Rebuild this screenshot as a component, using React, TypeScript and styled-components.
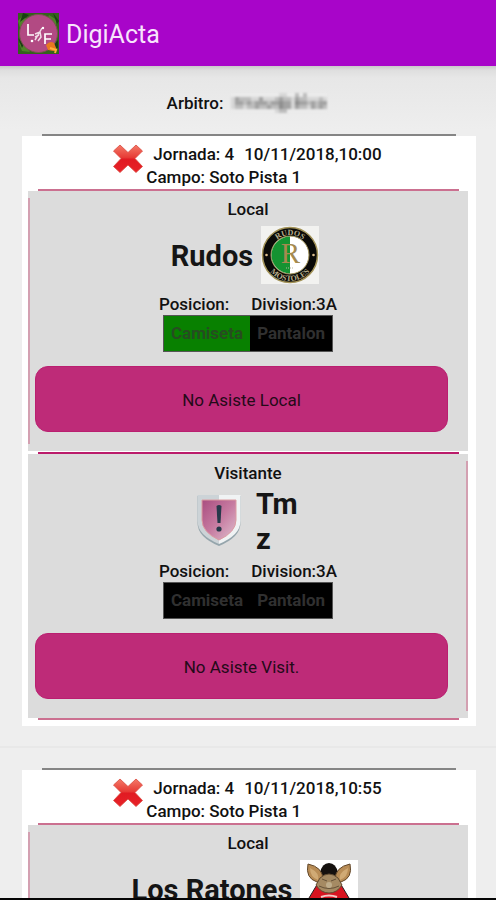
import React from "react";
import styled, { createGlobalStyle } from "styled-components";

const GlobalStyle = createGlobalStyle`
  * { box-sizing: border-box; }
  body { margin: 0; background: #eee; font-family: Roboto, "Liberation Sans", sans-serif; color: #111; }
`;

const Screen = styled.div`
  display: flex;
  flex-direction: column;
  height: 100vh;
  background: #eee;
  border-bottom: 2px solid #050505;
`;

const AppBar = styled.header`
  display: flex;
  align-items: center;
  gap: 7px;
  flex: none;
  height: 66px;
  padding: 0 18px;
  background: #a805c9;
`;

const AppTitle = styled.h1`
  margin: 0;
  padding-top: 3px;
  font-size: 25px;
  line-height: 32px;
  font-weight: 400;
  color: #f8e4fc;
`;

const Content = styled.main`
  flex: 1;
  min-height: 0;
  overflow-y: auto;
  scrollbar-width: none;
  background: linear-gradient(#c9c9c9, #dedede 4px, #e7e7e7 12px, #eee 64px);
`;

const Referee = styled.div`
  display: flex;
  justify-content: center;
  align-items: center;
  gap: 6px;
  padding: 26px 0 20px;
  font-size: 17px;
  line-height: 22px;
  font-weight: 500;
`;

const MatchItem = styled.article`
  padding: 0 20px 20px 22px;
  & + & {
    border-top: 2px solid #e8e8e8;
    padding-top: 20px;
  }
`;

const CardRule = styled.div`
  height: 2px;
  margin: 0 20px;
  background: #858585;
`;

const Card = styled.div`
  padding: 7px 8px 6px 6px;
  background: #fff;
`;

const CardHeader = styled.div`
  display: flex;
  justify-content: center;
  gap: 2px;
  padding-right: 2px;
  font-size: 17px;
  line-height: 23px;
  font-weight: 500;
`;

const MatchTime = styled.div`
  display: flex;
  gap: 10px;
  padding-left: 7px;
`;

const PinkRule = styled.div<{ $strong?: boolean }>`
  height: 2px;
  margin: ${(p) => (p.$strong ? 1 : 0)}px 9px 0 10px;
  background: ${(p) => (p.$strong ? "#bb1c6b" : "#cb7090")};
`;

const Panel = styled.section<{ $side: "left" | "right" }>`
  position: relative;
  padding: ${(p) => (p.$side === "right" ? 8 : 7)}px 20px 19px 7px;
  background: #dcdcdc;
  &::before {
    content: "";
    position: absolute;
    top: 7px;
    bottom: 7px;
    ${(p) => p.$side}: 0;
    width: 2px;
    background: #d3a0b1;
  }
`;

const Info = styled.div`
  display: flex;
  flex-direction: column;
  align-items: center;
  margin: 0 -13px 14px 0;
  font-size: 17px;
  line-height: 22px;
  font-weight: 500;
`;

const Role = styled.h2`
  margin: 0;
  font-size: 17px;
  line-height: 22px;
  font-weight: 500;
`;

const TeamRow = styled.div<{ $reverse?: boolean }>`
  display: flex;
  flex-direction: ${(p) => (p.$reverse ? "row-reverse" : "row")};
  align-items: center;
  gap: 8px;
  min-height: 73px;
  padding: 3px 6px 3px 0;
  svg { margin-bottom: 4px; }
`;

const TeamName = styled.div<{ $narrow?: boolean }>`
  width: ${(p) => (p.$narrow ? "44px" : "auto")};
  font-size: 29px;
  line-height: 35px;
  font-weight: 700;
  color: #151515;
`;

const Details = styled.div`
  display: flex;
  gap: 22px;
`;

const Kit = styled.div`
  display: flex;
  border: 1px solid #555;
`;

const KitPart = styled.span<{ $fill: string; $ink: string }>`
  padding: 0 7px;
  font-weight: 700;
  line-height: 35px;
  background: ${(p) => p.$fill};
  color: ${(p) => p.$ink};
`;

const AbsentButton = styled.button`
  display: block;
  width: 100%;
  height: 66px;
  padding: 2px 0 0;
  border: 1px solid #ba1f70;
  border-radius: 13px;
  background: #be2b78;
  font: 400 17px/22px Roboto, "Liberation Sans", sans-serif;
  color: #240a18;
`;

const AppLogo = () => (
  <svg width="41" height="41" viewBox="0 0 41 41" aria-hidden="true">
    <rect width="41" height="41" fill="#34621c" />
    <path d="M0 8l5-6 4 5-7 8zM31 2l8 5-2 8-8-8zM1 30l6 2 5 7-8-1z" fill="#4f8428" />
    <path d="M5 0l6 2-9 7zM35 0l6 8-2 3zM0 25l6 6-2 4zM33 35l7-8v8z" fill="#193f12" />
    <circle cx="20.5" cy="20.5" r="19" fill="#b24a83" stroke="#7b5250" />
    <path d="M10 11v11h6M27 31V21h7M27 26h6" fill="none" stroke="#fff" strokeWidth="1.7" />
    <path d="M24 15l-4 7-3 5M17 21l5-2 1 5-3 4M17 24l4-2" fill="none" stroke="#f1dce7" strokeWidth="1.5" />
    <circle cx="25" cy="15" r="1.2" fill="#fff" />
    <circle cx="14" cy="28" r="1.3" fill="#fff" />
    <path d="M28 32q4-5 8-2l3 7-4 1-5-1z" fill="#e87920" />
    <path d="M32 35l6 2-1 3" fill="none" stroke="#ffb03a" strokeWidth="2" />
  </svg>
);

const mosaic = [
  "000000000000110020200000",
  "132221131112322132211121",
  "133232333233433143323233",
  "122122322322433132213232",
  "000000000001220000000000",
];
const greys = ["#ebebeb", "#d6d6d6", "#bdbdbd", "#a3a3a3", "#8f8f8f"];

const HiddenAddress = styled.svg`
  filter: blur(1px);
`;

const MaskedAddress = () => (
  <HiddenAddress width="100" height="20" viewBox="0 0 96 20" role="img" aria-label="Oculto">
    {mosaic.map((line, y) =>
      [...line].map((level, x) => (
        <rect key={`${y}-${x}`} x={x * 4} y={y * 4} width="4" height="4" fill={greys[Number(level)]} />
      )),
    )}
  </HiddenAddress>
);

const CrossIcon = () => (
  <svg width="32" height="32" viewBox="0 0 32 32" aria-hidden="true">
    <defs>
      <linearGradient id="cross" x1="0" y1="0" x2="0" y2="1">
        <stop offset="0" stopColor="#f47a68" />
        <stop offset=".45" stopColor="#e73c36" />
        <stop offset=".52" stopColor="#e11b22" />
        <stop offset="1" stopColor="#e82128" />
      </linearGradient>
    </defs>
    <path
      d="M8 2l8 7.500L24 2l6.500 6-7.500 7.500 7.500 8L24 29.500l-8-7.500-8 7.500L1.500 23.500l7.500-8L1.500 8z"
      fill="url(#cross)"
      stroke="#d9493f"
      strokeWidth=".8"
      strokeLinejoin="round"
    />
  </svg>
);

const RudosCrest = () => (
  <svg width="58" height="58" viewBox="0 0 58 58" aria-label="Rudos">
    <defs>
      <path id="crestTop" d="M9 29a20 20 0 0 1 40 0" />
      <path id="crestBottom" d="M3 29a26 26 0 0 0 52 0" />
    </defs>
    <rect width="58" height="58" fill="#f2f2f0" />
    <circle cx="29" cy="29" r="27.500" fill="#0a0a08" stroke="#a39358" strokeWidth="1.500" />
    <circle cx="29" cy="29" r="19" fill="#fff" stroke="#a39358" />
    <path d="M29 10.500a18.500 18.500 0 0 0 0 37z" fill="#159331" />
    <text x="29.500" y="37" textAnchor="middle" fontFamily="Liberation Serif, serif" fontSize="29" fill="#a58a50">R</text>
    <text fontFamily="Liberation Serif, serif" fontWeight="700" fontSize="8" fill="#b9ae8c" textAnchor="middle">
      <textPath href="#crestTop" startOffset="50%">RUDOS</textPath>
    </text>
    <text fontFamily="Liberation Serif, serif" fontWeight="700" fontSize="8" fill="#b9ae8c" textAnchor="middle">
      <textPath href="#crestBottom" startOffset="50%">MOSTOLES</textPath>
    </text>
    <circle cx="5.500" cy="29" r="1.300" fill="#e0bf8e" />
    <circle cx="52.500" cy="29" r="1.300" fill="#e0bf8e" />
    <path d="M25 42h8" stroke="#b3b5a0" strokeDasharray="1 1" />
  </svg>
);

const ShieldCrest = () => (
  <svg width="58" height="58" viewBox="0 0 58 58" aria-label="Tmz">
    <defs>
      <linearGradient id="shield" x1="0" y1="0" x2="1" y2="1">
        <stop offset="0" stopColor="#a94d80" />
        <stop offset=".5" stopColor="#c67aa0" />
        <stop offset="1" stopColor="#dfc0cf" />
      </linearGradient>
    </defs>
    <path d="M7.500 5h43v27q0 14-21.500 23Q7.500 46 7.500 32z" fill="#95a5ac" />
    <path d="M7.500 4H29v49Q7.500 44 7.500 30z" fill="#ccd3d7" />
    <path d="M29 4h21.500v26q0 14-21.500 23z" fill="#f0f3f4" />
    <path d="M12 9h34v20q0 12-17 20Q12 41 12 29z" fill="url(#shield)" stroke="#dc9ba1" />
    <path d="M26.500 15q2.500-2 5 0l-1 17h-3z" fill="#27394a" />
    <circle cx="29" cy="38" r="2.600" fill="#27394a" />
  </svg>
);

const MouseCrest = () => (
  <svg width="58" height="58" viewBox="0 0 58 58" aria-label="Los Ratones">
    <rect width="58" height="58" fill="#fff" />
    <path d="M20 13Q22 3 29 3t9 10l-2 7H22z" fill="#15110f" />
    <path d="M18 23L6 43v15h46V43L40 23z" fill="#d81420" stroke="#222" />
    <path d="M8 4q-3 14 9 18l6-2Q23 7 8 4zM50 4q3 14-9 18l-6-2Q35 7 50 4z" fill="#b88c55" stroke="#62482b" />
    <path d="M10 8q0 9 8 12 2-7-8-12zM48 8q0 9-8 12-2-7 8-12z" fill="#d0aa75" />
    <path d="M20 18q9-8 18 0l4 7q-5 8-13 8t-13-8z" fill="#a58a63" stroke="#624c31" />
    <path d="M22 19l5 2M36 19l-5 2M19 26q10 5 20 0" stroke="#665239" fill="none" />
    <circle cx="29" cy="25" r="3" fill="#bfad8c" />
    <path d="M21 37q8-3 16 0" stroke="#f2c9c6" strokeWidth="2" fill="none" />
  </svg>
);

type Side = {
  role: string;
  name: string;
  crest: React.ReactNode;
  shirt: string;
  shirtInk: string;
  action: string;
  away?: boolean;
};

const TeamPanel = ({ team }: { team: Side }) => (
  <Panel $side={team.away ? "right" : "left"}>
    <Info>
      <Role>{team.role}</Role>
      <TeamRow $reverse={team.away}>
        <TeamName $narrow={team.away}>{team.name}</TeamName>
        {team.crest}
      </TeamRow>
      <Details>
        <span>Posicion:</span>
        <span>Division:3A</span>
      </Details>
      <Kit>
        <KitPart $fill={team.shirt} $ink={team.shirtInk}>Camiseta</KitPart>
        <KitPart $fill="#000" $ink="#303030">Pantalon</KitPart>
      </Kit>
    </Info>
    <AbsentButton type="button">{team.action}</AbsentButton>
  </Panel>
);

const local = {
  role: "Local",
  shirt: "#088000",
  shirtInk: "#264d20",
  action: "No Asiste Local",
};

const visitor: Side = {
  role: "Visitante",
  name: "Tm z",
  crest: <ShieldCrest />,
  shirt: "#000",
  shirtInk: "#303030",
  action: "No Asiste Visit.",
  away: true,
};

const matches: { time: string; home: Side; away: Side }[] = [
  { time: "10/11/2018,10:00", home: { ...local, name: "Rudos", crest: <RudosCrest /> }, away: visitor },
  { time: "10/11/2018,10:55", home: { ...local, name: "Los Ratones", crest: <MouseCrest /> }, away: visitor },
];

export default function App() {
  return (
    <>
      <GlobalStyle />
      <Screen>
        <AppBar>
          <AppLogo />
          <AppTitle>DigiActa</AppTitle>
        </AppBar>
        <Content>
          <Referee>
            <span>Arbitro:</span>
            <MaskedAddress />
          </Referee>
          {matches.map((match) => (
            <MatchItem key={match.time}>
              <CardRule />
              <Card>
                <CardHeader>
                  <CrossIcon />
                  <div>
                    <MatchTime>
                      <span>Jornada: 4</span>
                      <span>{match.time}</span>
                    </MatchTime>
                    <div>Campo: Soto Pista 1</div>
                  </div>
                </CardHeader>
                <PinkRule />
                <TeamPanel team={match.home} />
                <PinkRule $strong />
                <TeamPanel team={match.away} />
                <PinkRule />
              </Card>
            </MatchItem>
          ))}
        </Content>
      </Screen>
    </>
  );
}
